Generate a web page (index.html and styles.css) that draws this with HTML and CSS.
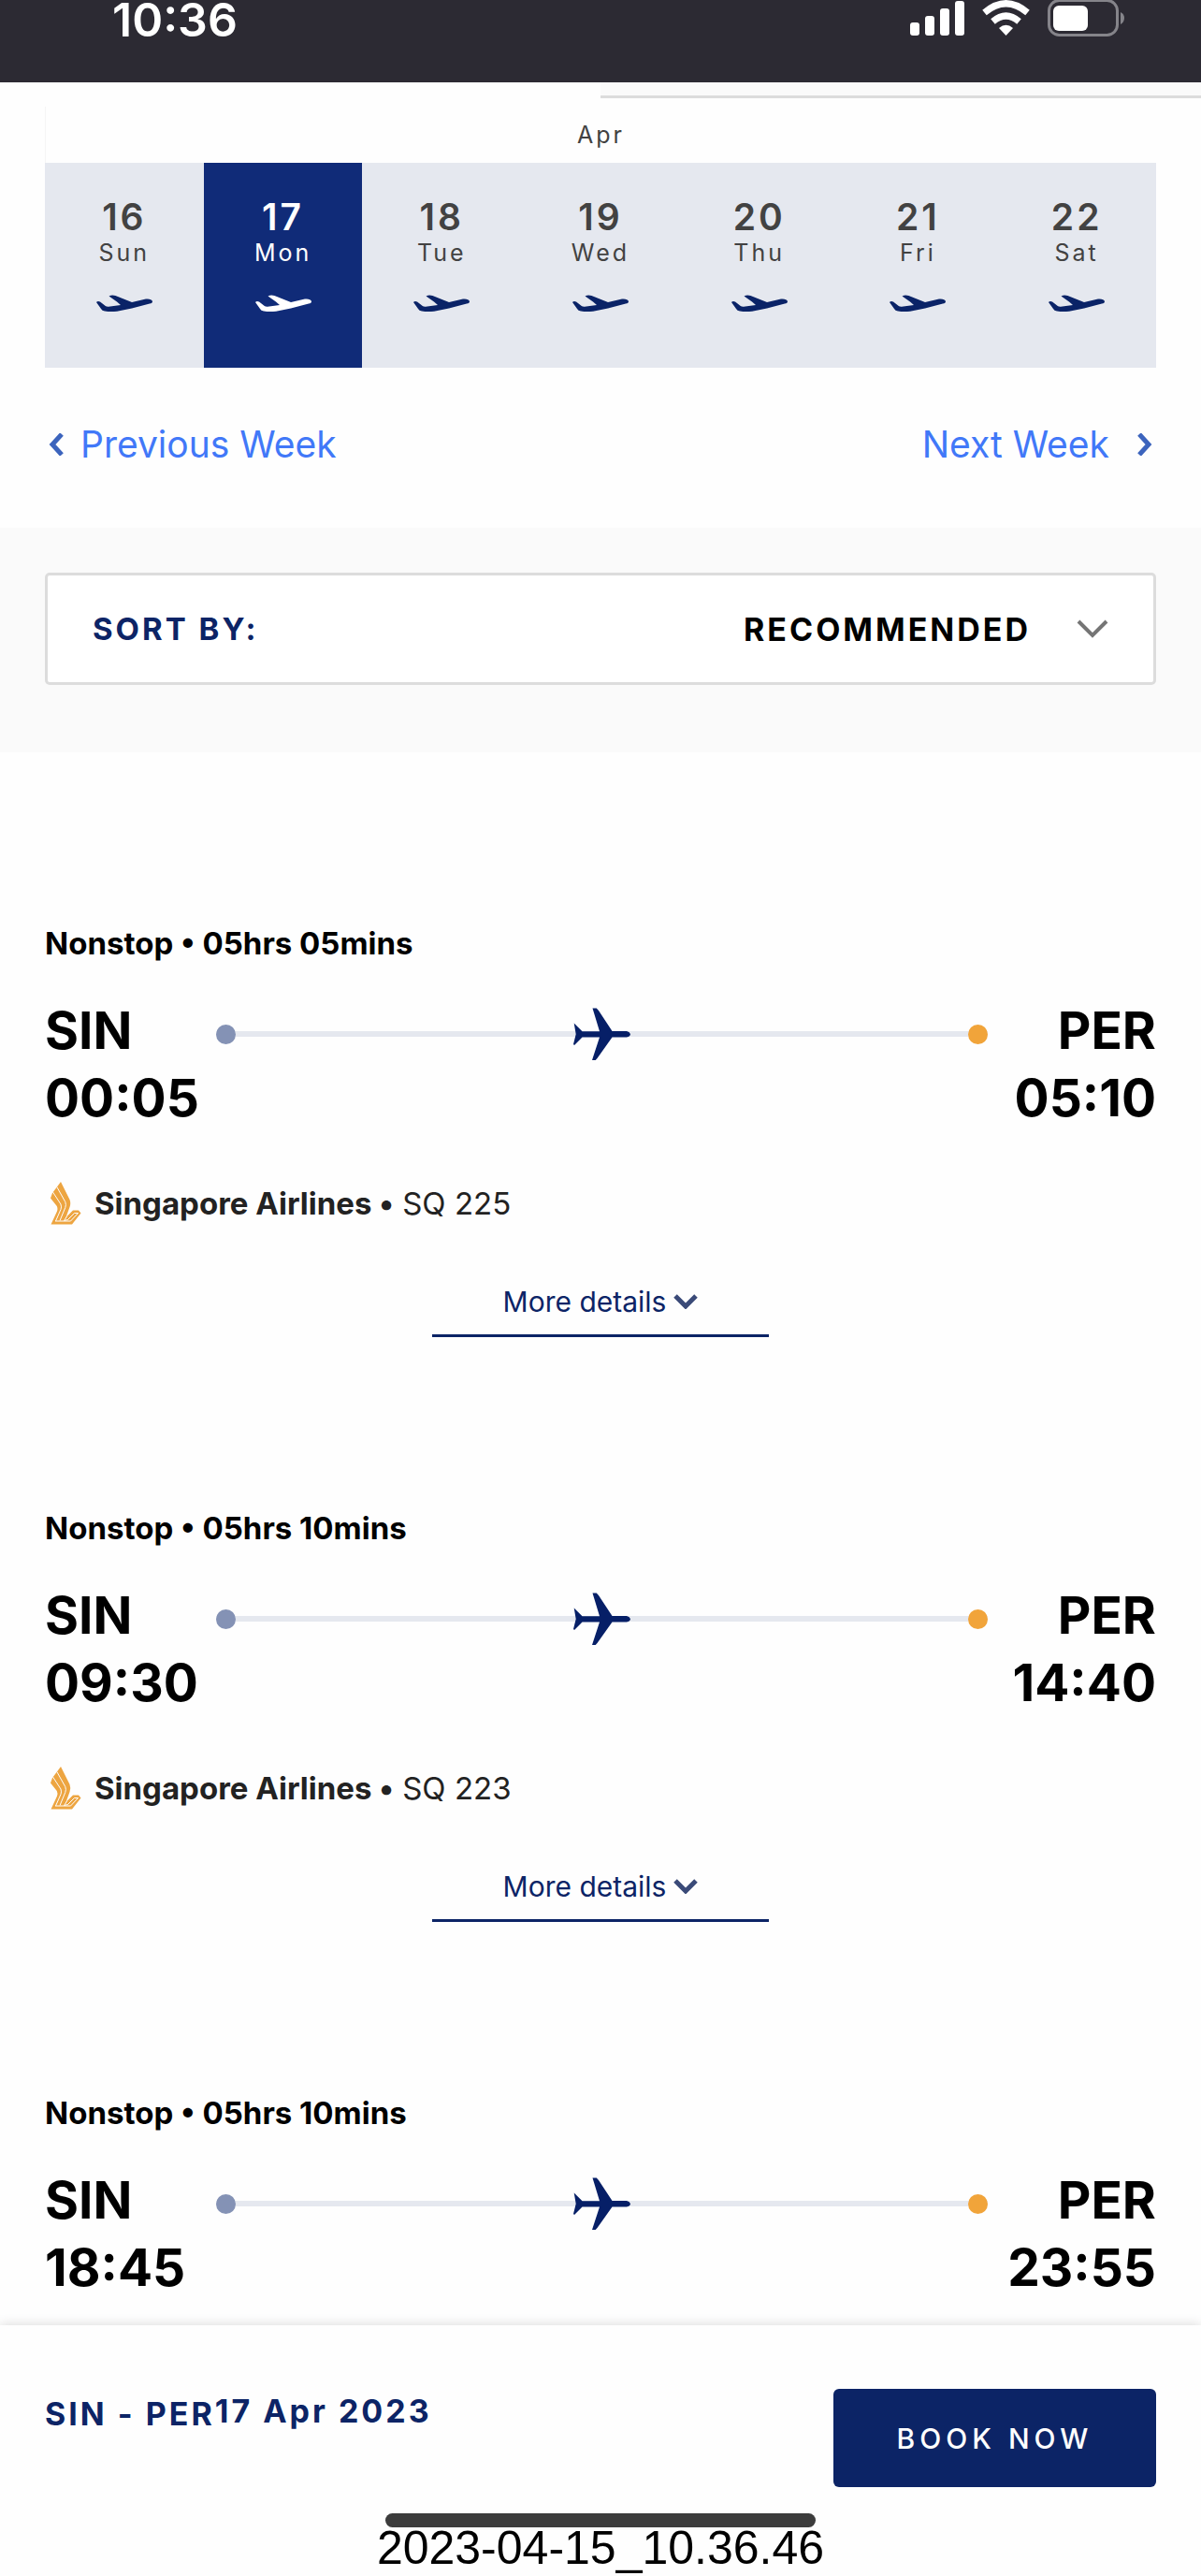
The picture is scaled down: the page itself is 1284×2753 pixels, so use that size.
FILE: index.html
```html
<!DOCTYPE html>
<html lang="en">
<head>
    <meta charset="UTF-8">
    <meta name="viewport" content="width=device-width, initial-scale=1.0">
    <title>Select Flight</title>
    <link rel="stylesheet" href="styles.css">
</head>
<body>

    <!-- shared icons -->
    <svg class="icon-defs" aria-hidden="true">
        <symbol id="takeoff" viewBox="0 0 60 20">
            <path d="M0 9Q1.500 7.200 4 8.500L8.500 12Q10 14 13 13.700L26 12L22 8.500L13.500 2.500Q16.500 0.800 20.500 2L38 9L53 5.500Q59 5 60 8Q60 10 57 10.500L38 15.500L22 18.700Q15 19.500 9 18.500Q6 18 5 16Z"/>
        </symbol>
        <symbol id="plane" viewBox="0 0 61 57">
            <path d="M20.500 0.500H24.700L27 3L41.500 25H57Q60.500 26 61 28.300Q60.500 31 57 31.500H41.500L25.500 54L23.700 56H20L28 31.500H9.500L1 40L0 39L2.700 28.300L0.700 16.500L9.500 25.200H28Z"/>
        </symbol>
        <symbol id="bird" viewBox="0 0 33 46">
            <path d="M11 0L20.500 19Q22 23 20.500 27L16.500 38L24 30.500H30L32.500 33.500L23 45.500H0.500L7 31.500Q8 28.500 6.800 26L0 17.500L2 12L6.500 6Z"/>
            <path class="bird-line" d="M2.500 11L11 24Q12 27 11 29.500L5.500 42M6.800 5.500L15.800 21.500Q17 24.500 15.800 27.500L10 41.500M5 42H21.500L29.500 33.500H25.500L18.500 40.500L14.500 41.500L17.500 37"/>
        </symbol>
    </svg>

    <header class="status-bar">
        <span class="clock">10:36</span>
        <svg class="status-icons" viewBox="0 0 230 40" aria-label="Signal, wifi and battery">
            <g fill="#fff">
                <rect x="0" y="24" width="10" height="14" rx="3"/>
                <rect x="16" y="17" width="10" height="21" rx="3"/>
                <rect x="32" y="9" width="10" height="29" rx="3"/>
                <rect x="48" y="1" width="10" height="37" rx="3"/>
                <path d="M95 30Q102.500 23.500 110 30L102.500 38Z"/>
                <rect x="153" y="6" width="37" height="27" rx="6"/>
            </g>
            <g fill="none" stroke="#fff" stroke-width="7">
                <path d="M79.500 13.500Q102.500 -6 125.500 13.500"/>
                <path d="M88.500 23Q102.500 11 116.500 23"/>
            </g>
            <rect x="148.500" y="0.500" width="73" height="37" rx="11" fill="none" stroke="#85848a" stroke-width="3"/>
            <path d="M225 13Q229 15 229 19Q229 24 225 26Z" fill="#85848a"/>
        </svg>
    </header>

    <main>
        <section class="calendar">
            <div class="tab-edge"></div>
            <div class="month">Apr</div>
            <div class="days">
                <button class="day"><b>16</b><span>Sun</span><svg><use href="#takeoff"/></svg></button>
                <button class="day selected"><b>17</b><span>Mon</span><svg><use href="#takeoff"/></svg></button>
                <button class="day"><b>18</b><span>Tue</span><svg><use href="#takeoff"/></svg></button>
                <button class="day"><b>19</b><span>Wed</span><svg><use href="#takeoff"/></svg></button>
                <button class="day"><b>20</b><span>Thu</span><svg><use href="#takeoff"/></svg></button>
                <button class="day"><b>21</b><span>Fri</span><svg><use href="#takeoff"/></svg></button>
                <button class="day"><b>22</b><span>Sat</span><svg><use href="#takeoff"/></svg></button>
            </div>
            <nav class="week-nav">
                <a href="#">
                    <svg viewBox="0 0 16 24"><path d="M14 1L4 12L14 23"/></svg>
                    Previous Week
                </a>
                <a href="#" class="next">
                    Next Week
                    <svg viewBox="0 0 16 24"><path d="M2 1L12 12L2 23"/></svg>
                </a>
            </nav>
        </section>

        <section class="sort">
            <div class="sort-box">
                <label for="sortBy">SORT BY:</label>
                <select id="sortBy">
                    <option>RECOMMENDED</option>
                    <option>DEPARTURE</option>
                    <option>DURATION</option>
                </select>
                <svg viewBox="0 0 34 20"><path d="M2 2L17 17L32 2"/></svg>
            </div>
        </section>

        <section class="flights">
            <article class="flight">
                <h2>Nonstop • 05hrs 05mins</h2>
                <div class="route">
                    <div class="stop">SIN<br>00:05</div>
                    <div class="track"><i class="dot"></i><svg><use href="#plane"/></svg><i class="dot end"></i></div>
                    <div class="stop arrive">PER<br>05:10</div>
                </div>
                <p class="airline"><svg><use href="#bird"/></svg><span><b>Singapore Airlines •</b> SQ 225</span></p>
                <button class="more">More details <svg viewBox="0 0 26 16"><path d="M2 2L13 13L24 2"/></svg></button>
            </article>

            <article class="flight">
                <h2>Nonstop • 05hrs 10mins</h2>
                <div class="route">
                    <div class="stop">SIN<br>09:30</div>
                    <div class="track"><i class="dot"></i><svg><use href="#plane"/></svg><i class="dot end"></i></div>
                    <div class="stop arrive">PER<br>14:40</div>
                </div>
                <p class="airline"><svg><use href="#bird"/></svg><span><b>Singapore Airlines •</b> SQ 223</span></p>
                <button class="more">More details <svg viewBox="0 0 26 16"><path d="M2 2L13 13L24 2"/></svg></button>
            </article>

            <article class="flight">
                <h2>Nonstop • 05hrs 10mins</h2>
                <div class="route">
                    <div class="stop">SIN<br>18:45</div>
                    <div class="track"><i class="dot"></i><svg><use href="#plane"/></svg><i class="dot end"></i></div>
                    <div class="stop arrive">PER<br>23:55</div>
                </div>
            </article>
        </section>
    </main>

    <footer class="booking">
        <div class="booking-row">
            <p class="trip">SIN - PER<span>17 Apr 2023</span></p>
            <button class="book-btn">BOOK NOW</button>
        </div>
        <div class="home-bar"></div>
        <div class="caption">2023-04-15_10.36.46</div>
    </footer>

</body>
</html>
```
FILE: styles.css
```css
* {
    box-sizing: border-box;
}
body {
    margin: 0;
    min-height: 100vh;
    display: flex;
    flex-direction: column;
    background: #fefefe;
    color: #000;
    font-family: Inter, "Liberation Sans", sans-serif;
}
h2, p {
    margin: 0;
}
button, select {
    font-family: inherit;
    border: none;
    border-radius: 0;
    background: none;
    padding: 0;
    margin: 0;
    cursor: pointer;
}
svg {
    display: block;
    flex: none;
}
main {
    flex: 1;
}
.icon-defs {
    display: none;
}

/* status bar */
.status-bar {
    display: flex;
    justify-content: space-between;
    align-items: flex-start;
    height: 88px;
    padding: 0 81px 0 120px;
    background: #2c2a33;
}
.clock {
    color: #fff;
    font-size: 50px;
    font-weight: 600;
    line-height: 42px;
}
.status-icons {
    width: 230px;
    height: 40px;
}

/* calendar */
.tab-edge {
    height: 17px;
    margin-left: 50%;
    background: #fafafa;
    border-bottom: 3px solid #dcdcdc;
}
.month {
    margin: 9px 48px 0;
    border-left: 1px solid #f5f5f5;
    color: #424242;
    font-size: 25px;
    line-height: 60px;
    letter-spacing: 3px;
    text-align: center;
}
.days {
    display: grid;
    grid-template-columns: repeat(7, 1fr);
    margin: 0 48px;
    background: #e5e8ef;
}
.day {
    display: flex;
    flex-direction: column;
    align-items: center;
    padding: 38px 0 59px;
    color: #424242;
    letter-spacing: 3px;
}
.day b {
    font-size: 39px;
    font-weight: 600;
    line-height: 40px;
}
.day span {
    margin-top: 4px;
    font-size: 25px;
    line-height: 28px;
}
.day svg {
    width: 60px;
    height: 20px;
    margin-top: 30px;
    fill: #0a2367;
}
.day.selected {
    background: #102b78;
    color: #fff;
}
.day.selected svg {
    fill: #fff;
}
.week-nav {
    display: flex;
    justify-content: space-between;
    padding: 58px 52px 65px;
}
.week-nav a {
    display: flex;
    align-items: center;
    gap: 18px;
    color: #4178f8;
    font-size: 39px;
    line-height: 48px;
    text-decoration: none;
}
.week-nav .next {
    gap: 30px;
}
.week-nav svg {
    width: 16px;
    height: 24px;
    fill: none;
    stroke: #3c64bd;
    stroke-width: 5;
}

/* sort */
.sort {
    padding: 48px 48px 72px;
    background: #fafafa;
}
.sort-box {
    display: flex;
    align-items: center;
    height: 120px;
    padding: 0 48px;
    background: #fff;
    border: 3px solid #dcdcdc;
    border-radius: 5px;
}
.sort-box label {
    margin-right: auto;
    color: #0c2466;
    font-size: 33px;
    font-weight: 700;
    letter-spacing: 3px;
}
.sort-box select {
    appearance: none;
    color: #000;
    font-size: 34px;
    font-weight: 700;
    letter-spacing: 3px;
}
.sort-box svg {
    width: 34px;
    height: 20px;
    margin-left: 48px;
    fill: none;
    stroke: #757575;
    stroke-width: 4;
}

/* flights */
.flight {
    padding: 184px 48px 0;
}
.flight h2 {
    font-size: 33px;
    font-weight: 700;
    line-height: 40px;
}
.route {
    display: flex;
    margin-top: 37px;
}
.stop {
    width: 183px;
    font-size: 55px;
    font-weight: 700;
    line-height: 72px;
}
.arrive {
    width: 180px;
    text-align: right;
}
.track {
    flex: 1;
    display: flex;
    align-items: center;
    justify-content: space-between;
    height: 80px;
    background: linear-gradient(#e5e8ef, #e5e8ef) center / 100% 6px no-repeat;
}
.track svg {
    width: 61px;
    height: 57px;
    fill: #061f67;
}
.dot {
    width: 21px;
    height: 21px;
    border-radius: 50%;
    background: #8492b5;
}
.dot.end {
    background: #f1a43a;
}
.airline {
    display: flex;
    align-items: center;
    gap: 14px;
    margin-top: 57px;
    padding-left: 6px;
    color: #222;
    font-size: 33px;
    line-height: 40px;
}
.airline b {
    font-weight: 700;
}
.airline svg {
    width: 33px;
    height: 46px;
    margin: -3px 0;
    fill: #eda541;
}
.bird-line {
    fill: none;
    stroke: #fefefe;
    stroke-width: 1;
}
.more {
    display: flex;
    align-items: center;
    justify-content: center;
    gap: 8px;
    width: 360px;
    margin: 65px auto 0;
    padding-bottom: 15px;
    border-bottom: 3px solid #0c2466;
    color: #0c2466;
    font-size: 30px;
    line-height: 40px;
}
.more svg {
    width: 26px;
    height: 16px;
    fill: none;
    stroke: #3a4a78;
    stroke-width: 5;
}

/* booking bar */
.booking {
    position: relative;
    background: #fefefe;
    box-shadow: 0 0 12px rgba(0,0,0,0.16);
}
.booking-row {
    display: flex;
    justify-content: space-between;
    align-items: flex-start;
    padding: 68px 48px 28px;
}
.trip {
    display: flex;
    margin-top: 11px;
    color: #0c2466;
    font-size: 34px;
    font-weight: 700;
    line-height: 32px;
    letter-spacing: 3px;
}
.trip span {
    line-height: 26px;
}
.book-btn {
    width: 345px;
    height: 105px;
    border-radius: 6px;
    background: #0c2466;
    color: #fff;
    font-size: 30px;
    font-weight: 500;
    letter-spacing: 5px;
}
.home-bar {
    width: 460px;
    height: 15px;
    margin: 0 auto;
    border-radius: 8px;
    background: #3c3c3c;
}
.caption {
    padding-bottom: 8px;
    font-family: "Liberation Sans", Arial, sans-serif;
    font-size: 50px;
    line-height: 44px;
    text-align: center;
}
```
